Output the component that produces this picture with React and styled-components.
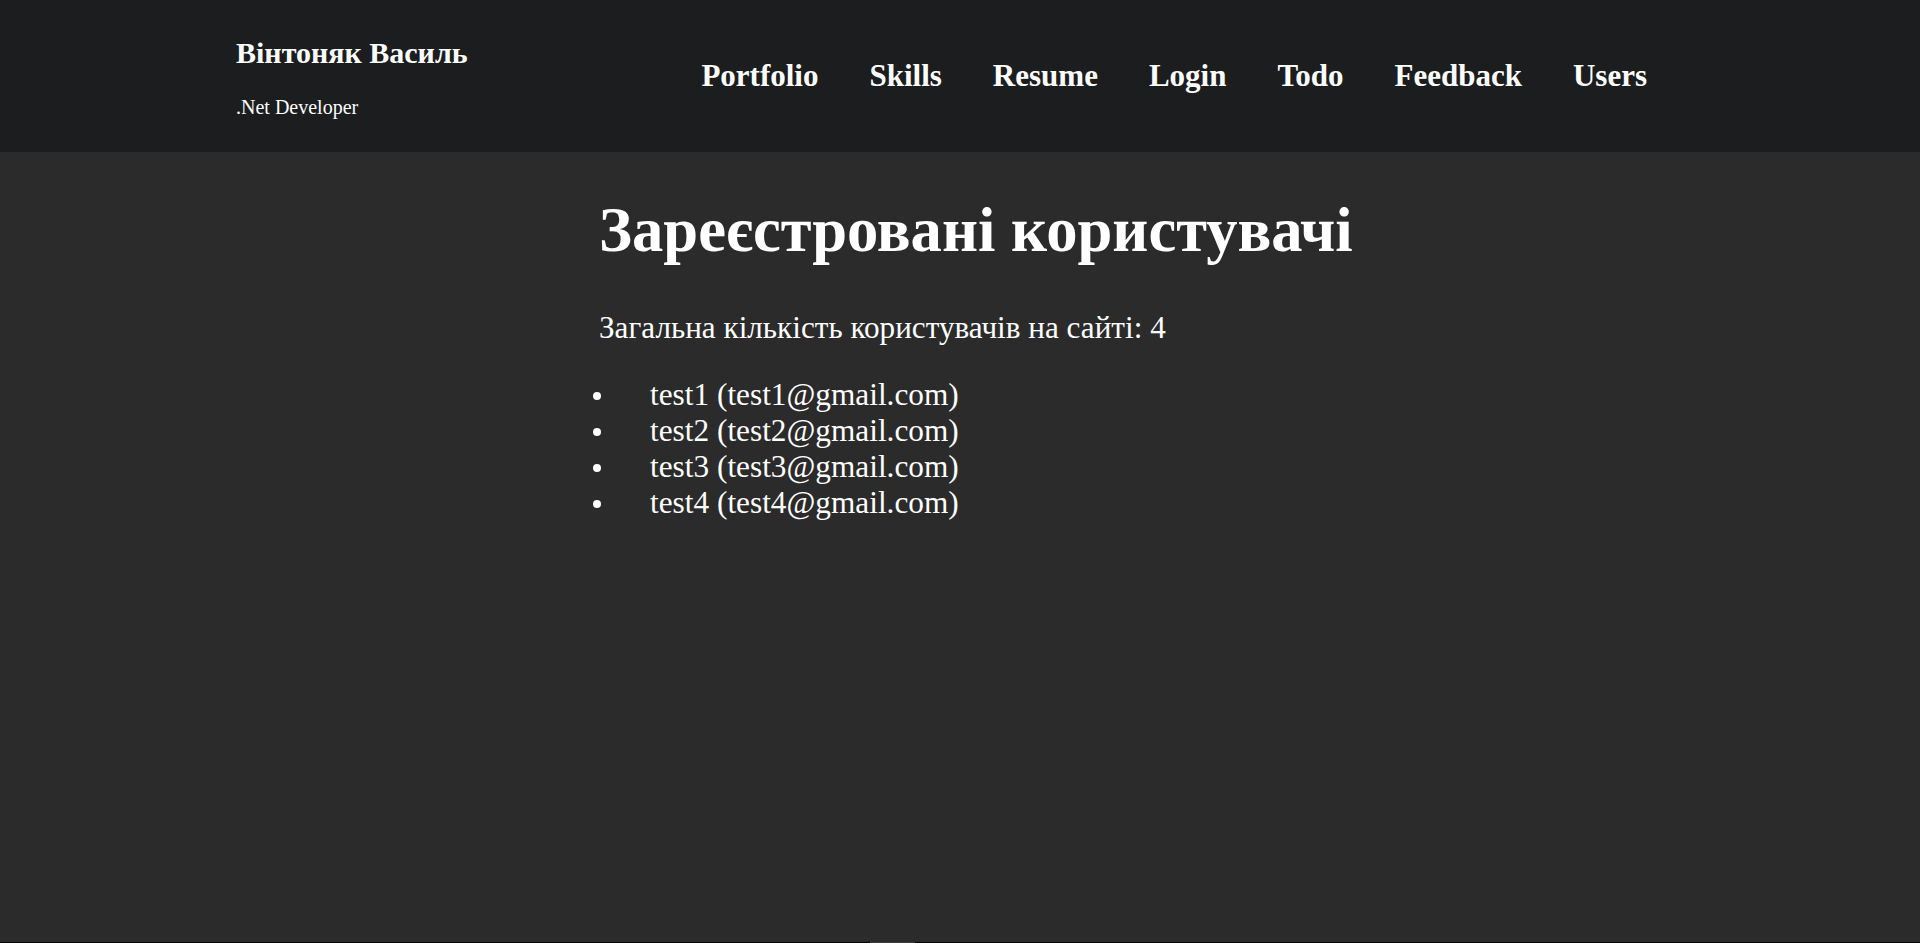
import React from "react";
import { styled, createGlobalStyle } from "styled-components";

const GlobalStyle = createGlobalStyle`
html, body {
  margin: 0;
  padding: 0;
  background: #2b2b2b;
}
body {
  font-family: "Liberation Serif", "Times New Roman", serif;
  color: #ffffff;
}
`;

const Header = styled.header`
height: 152px;
background-color: #1c1d1f;
display: flex;
align-items: center;
`;

const HeaderInner = styled.div`
width: 1411px;
margin-left: 236px;
display: flex;
align-items: center;
justify-content: space-between;
`;

const Brand = styled.div`
display: flex;
flex-direction: column;
margin-top: 3px;
`;

const Name = styled.h2`
margin: 0;
font-size: 30px;
font-weight: 700;
line-height: normal;
`;

const Role = styled.p`
margin: 26px 0 0;
font-size: 20px;
`;

const Nav = styled.nav`
display: flex;
gap: 51px;
`;

const NavLink = styled.a`
font-size: 31px;
font-weight: 700;
color: #ffffff;
text-decoration: none;
cursor: pointer;
`;

const Main = styled.main`
min-height: 790px;
padding-left: 599px;
display: flex;
flex-direction: column;
`;

const Title = styled.h1`
margin: 42px 0 0;
font-size: 62.6px;
font-weight: 700;
line-height: normal;
`;

const Count = styled.p`
margin: 43px 0 0;
font-size: 31.2px;
`;

const UserList = styled.ul`
margin: 31px 0 0;
padding: 0;
list-style: none;
`;

const UserItem = styled.li`
font-size: 31.3px;
line-height: normal;
display: flex;
align-items: center;

&::before {
  content: "";
  width: 8px;
  height: 8px;
  border-radius: 50%;
  background-color: #ffffff;
  margin: 2px 49px 0 -6px;
  flex-shrink: 0;
}
`;

const Footer = styled.footer`
height: 1px;
background-color: #000000;
display: flex;
`;

const FooterMark = styled.div`
margin-left: 870px;
width: 45px;
background-color: #3a3a3a;
`;

const links = ["Portfolio", "Skills", "Resume", "Login", "Todo", "Feedback", "Users"];

const users = [
  { name: "test1", email: "test1@gmail.com" },
  { name: "test2", email: "test2@gmail.com" },
  { name: "test3", email: "test3@gmail.com" },
  { name: "test4", email: "test4@gmail.com" },
];

const App = () => {
  return (
    <>
      <GlobalStyle />
      <Header>
        <HeaderInner>
          <Brand>
            <Name>Вінтоняк Василь</Name>
            <Role>.Net Developer</Role>
          </Brand>
          <Nav>
            {links.map((l) => (
              <NavLink key={l}>{l}</NavLink>
            ))}
          </Nav>
        </HeaderInner>
      </Header>
      <Main>
        <Title>Зареєстровані користувачі</Title>
        <Count>Загальна кількість користувачів на сайті: {users.length}</Count>
        <UserList>
          {users.map((u) => (
            <UserItem key={u.email}>
              {u.name} ({u.email})
            </UserItem>
          ))}
        </UserList>
      </Main>
      <Footer>
        <FooterMark />
      </Footer>
    </>
  );
};

export default App;
